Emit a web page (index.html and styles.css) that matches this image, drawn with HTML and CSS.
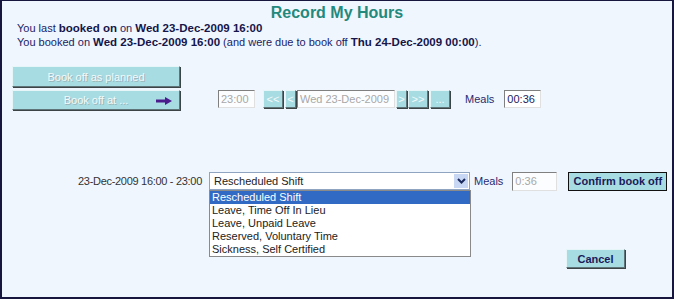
FILE: index.html
```html
<!DOCTYPE html>
<html lang="en">
<head>
  <meta charset="UTF-8">
  <title>Record My Hours</title>
  <link rel="stylesheet" href="styles.css">
</head>
<body>
  <div class="frame">
    <h1 class="title">Record My Hours</h1>
    <p class="info">You last <b>booked on</b> on <b>Wed 23-Dec-2009 16:00</b></p>
    <p class="info">You booked on <b>Wed 23-Dec-2009 16:00</b> (and were due to book off <b>Thu 24-Dec-2009 00:00</b>).</p>

    <div class="bookoff">
      <div class="actions">
        <button class="btn wide" disabled>Book off as planned</button>
        <button class="btn wide at" disabled>
          <span>Book off at ...</span>
          <svg class="arrow" width="16" height="8" viewBox="0 0 16 8">
            <path d="M0 2.5h9V0l7 4-7 4V5.5H0z" fill="#4a1c8c"/>
          </svg>
        </button>
      </div>

      <!-- date/time picker -->
      <div class="picker">
        <input class="field time" value="23:00" disabled>
        <button class="btn nav dbl" disabled>&lt;&lt;</button>
        <button class="btn nav" disabled>&lt;</button>
        <input class="field date" value="Wed 23-Dec-2009" disabled>
        <button class="btn nav" disabled>&gt;</button>
        <button class="btn nav dbl" disabled>&gt;&gt;</button>
        <button class="btn nav dbl" disabled>...</button>
        <span class="label meals-label">Meals</span>
        <input class="field meals" value="00:36">
      </div>
    </div>

    <div class="shift">
      <span class="period">23-Dec-2009 16:00 - 23:00</span>
      <div class="combo">
        <div class="combo-box">
          <span>Rescheduled Shift</span>
          <span class="combo-arrow">
            <svg width="9" height="6" viewBox="0 0 9 6"><path d="M1 1l3.5 3.5L8 1" fill="none" stroke="#1b2a5c" stroke-width="2"/></svg>
          </span>
        </div>
        <ul class="combo-list">
          <li class="selected">Rescheduled Shift</li>
          <li>Leave, Time Off In Lieu</li>
          <li>Leave, Unpaid Leave</li>
          <li>Reserved, Voluntary Time</li>
          <li>Sickness, Self Certified</li>
        </ul>
      </div>
      <span class="label">Meals</span>
      <input class="field meals2" value="0:36" disabled>
      <button class="btn confirm">Confirm book off</button>
    </div>

    <div class="footer">
      <button class="btn cancel">Cancel</button>
    </div>
  </div>
</body>
</html>
```

FILE: styles.css
```css
body {
  margin: 0;
  font-family: "Liberation Sans", Arial, sans-serif;
  font-size: 11px;
  color: #1b1b5e;
}
.frame {
  width: 674px;
  height: 299px;
  box-sizing: border-box;
  border: 2px solid #16163f;
  border-top-width: 1px;
  background-color: #eff6fe;
}
.title {
  margin: 3px 0 0;
  text-align: center;
  font-size: 16px;
  line-height: 17px;
  color: #23897c;
}
.info {
  margin: 0;
  padding-left: 15px;
  line-height: 14px;
  font-size: 11px;
  color: #1c1c66;
}
.info b {
  font-size: 11.5px;
  color: #15154a;
}
.bookoff {
  display: flex;
  align-items: flex-end;
  margin-top: 17px;
}
.actions {
  display: flex;
  flex-direction: column;
  gap: 3px;
  margin-left: 10px;
}
.btn {
  font-family: "Liberation Sans", Arial, sans-serif;
  font-size: 11px;
  background-color: #a8dce3;
  border: 1px solid;
  border-color: #e6f6f8 #5f7478 #5f7478 #e6f6f8;
  box-shadow: 1px 1px 0 #3c4446;
  padding: 0;
  color: #1a1a5a;
}
.btn:disabled {
  color: #f2fafa;
  text-shadow: 1px 1px 0 #9ab4b8;
}
.wide {
  width: 168px;
  height: 21px;
}
.at {
  height: 20px;
  display: flex;
  align-items: center;
  justify-content: center;
  position: relative;
}
.at .arrow {
  position: absolute;
  right: 7px;
  top: 6px;
}
.picker {
  display: flex;
  align-items: center;
  margin-left: 38px;
  margin-bottom: 2px;
  height: 18px;
}
.field {
  font-family: "Liberation Sans", Arial, sans-serif;
  font-size: 11px;
  height: 18px;
  box-sizing: border-box;
  padding: 0 2px;
  border: 1px solid;
  border-color: #808080 #e0e0e0 #e0e0e0 #808080;
  background-color: #fff;
  color: #1b1b5e;
}
.field:disabled {
  background-color: #fbfdff;
  color: #a8a8a8;
}
.time {
  width: 37px;
  margin-right: 8px;
}
.nav {
  height: 18px;
  width: 11px;
  margin-right: 1px;
}
.nav.dbl {
  width: 20px;
  margin-right: 2px;
}
.nav:disabled {
  color: #f4fafa;
  text-shadow: none;
}
.date {
  width: 98px;
  margin-right: 1px;
}
.label {
  color: #2a2a6e;
}
.meals-label {
  margin-left: 13px;
  margin-right: 10px;
}
.meals {
  width: 37px;
}
.shift {
  display: flex;
  align-items: center;
  margin-top: 61px;
  height: 20px;
}
.period {
  width: 200px;
  text-align: right;
  margin-right: 7px;
  color: #333;
  letter-spacing: -0.3px;
}
.combo {
  position: relative;
  width: 261px;
  margin-right: 4px;
}
.combo-box {
  height: 18px;
  box-sizing: border-box;
  border: 1px solid #8fa4c0;
  background-color: #fff;
  display: flex;
  align-items: center;
  justify-content: space-between;
  padding-left: 4px;
  color: #222;
}
.combo-arrow {
  width: 14px;
  height: 14px;
  margin-right: 1px;
  background-color: #c8d8f4;
  display: flex;
  align-items: center;
  justify-content: center;
}
.combo-list {
  position: absolute;
  left: 0;
  top: 18px;
  width: 262px;
  margin: 0;
  padding: 0;
  list-style: none;
  background-color: #fff;
  border: 1px solid #8a8a8a;
  box-sizing: border-box;
  color: #222;
}
.combo-list li {
  height: 13px;
  line-height: 13px;
  padding-left: 2px;
  font-size: 11px;
}
.combo-list .selected {
  background-color: #316ac5;
  color: #fff;
}
.meals2 {
  width: 45px;
  height: 19px;
  margin-left: 9px;
}
.confirm {
  width: 99px;
  height: 19px;
  margin-left: 11px;
  font-weight: bold;
  font-size: 11px;
  border: 1px solid #111;
  box-shadow: none;
}
.footer {
  margin-top: 58px;
  margin-left: 564px;
}
.cancel {
  width: 59px;
  height: 19px;
  font-weight: bold;
  font-size: 11px;
}
```
